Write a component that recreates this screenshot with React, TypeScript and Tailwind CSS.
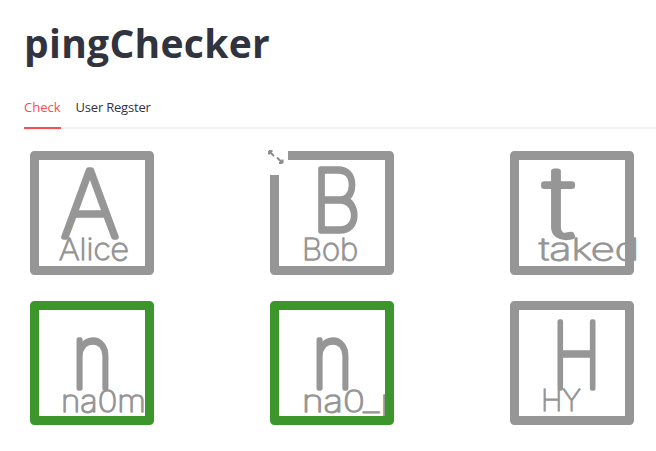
import { Fragment } from 'react'

type Card = {
  big: string
  bx: number
  bw: number
  by: number
  bs: number
  label: string
  lx: number
  lw: number
  ly: number
  ok?: boolean
  expand?: boolean
  wide?: boolean
}

const cards: Card[] = [
  { big: 'A', bx: 31, bw: 58, by: 86, bs: 92, label: 'Alice', lx: 29, lw: 70, ly: 109 },
  { big: 'B', bx: 42, bw: 49, by: 80, bs: 85, label: 'Bob', lx: 32, lw: 56, ly: 109, expand: true },
  { big: 't', bx: 34, bw: 30, by: 86, bs: 98, label: 'takeda', lx: 29, lw: 122, ly: 109, wide: true },
  { big: 'n', bx: 42, bw: 41, by: 87, bs: 87, label: 'na0m', lx: 31, lw: 85, ly: 111, ok: true },
  { big: 'n', bx: 42, bw: 41, by: 87, bs: 87, label: 'na0_p', lx: 32, lw: 100, ly: 111, ok: true },
  { big: 'H', bx: 42, bw: 49, by: 87, bs: 90, label: 'HY', lx: 31, lw: 40, ly: 110 },
]

const GRAY = '#969696'
const GREEN = '#3d962b'

function Avatar({ c }: { c: Card }) {
  const font = { fontFamily: 'Inter, "DejaVu Sans", sans-serif', fontWeight: 100 }
  const w = c.wide ? 128 : 124
  return (
    <div className="relative h-[124px]" style={{ width: w }}>
      <svg width={w} height="124" viewBox={`0 0 ${w} 124`} className="block">
        <text
          x={c.bx}
          y={c.by}
          fontSize={c.bs}
          textLength={c.bw}
          lengthAdjust="spacingAndGlyphs"
          fill={GRAY}
          stroke={GRAY}
          strokeWidth={5.5}
          strokeLinejoin="round"
          style={font}
        >
          {c.big}
        </text>
        <text
          x={c.lx}
          y={c.ly}
          fontSize={30}
          textLength={c.lw}
          lengthAdjust="spacingAndGlyphs"
          fill={GRAY}
          stroke={GRAY}
          strokeWidth={1.5}
          strokeLinejoin="round"
          style={font}
        >
          {c.label}
        </text>
        <rect
          x="4.5"
          y="4.5"
          width="115"
          height="115"
          fill="none"
          stroke={c.ok ? GREEN : GRAY}
          strokeWidth="9"
          strokeLinejoin="round"
        />
      </svg>
      {c.expand && (
        // fullscreen button sits over the top-left corner
        <div className="absolute -left-2 -top-1 w-[26px] h-[28px] bg-white flex items-start justify-start pl-[6px] pt-[3px]">
          <svg width="16" height="14" viewBox="0 0 16 14">
            <path d="M1 1 L6 6 M1 1 H4.5 M1 1 V4.5" stroke="#8c8c8c" strokeWidth="2" fill="none" />
            <path d="M14.5 13 L9 7.5 M14.5 13 H11 M14.5 13 V9.5" stroke="#8c8c8c" strokeWidth="2" fill="none" />
          </svg>
        </div>
      )}
    </div>
  )
}

export default function App() {
  return (
    <div className="min-h-screen bg-white pt-[17px] overflow-hidden" style={{ fontFamily: '"Open Sans", "Liberation Sans", sans-serif' }}>
      <div className="pl-6">
        <h1 className="text-[39px] leading-[52px] font-bold text-[#31333f] tracking-[0.3px]">pingChecker</h1>
      </div>

      {/* Tabs */}
      <div className="pl-6 mt-[29px]">
        <div className="flex gap-[15px] text-[13px] text-[#31333f] relative">
          <div className="pb-[9px] text-[#ff4b4b] border-b-2 border-[#ff4b4b] relative z-10">Check</div>
          <div className="pb-[9px] tracking-[-0.2px]">User Regster</div>
        </div>
        <div className="h-[2px] bg-[#f0f2f6] -mt-[2px]" />
      </div>

      {/* Members */}
      <div className="pl-[30px] pt-[22px] grid grid-cols-[repeat(3,240px)] gap-y-[26px]">
        {cards.map((c, i) => (
          <Fragment key={i}>
            <Avatar c={c} />
          </Fragment>
        ))}
      </div>
    </div>
  )
}
